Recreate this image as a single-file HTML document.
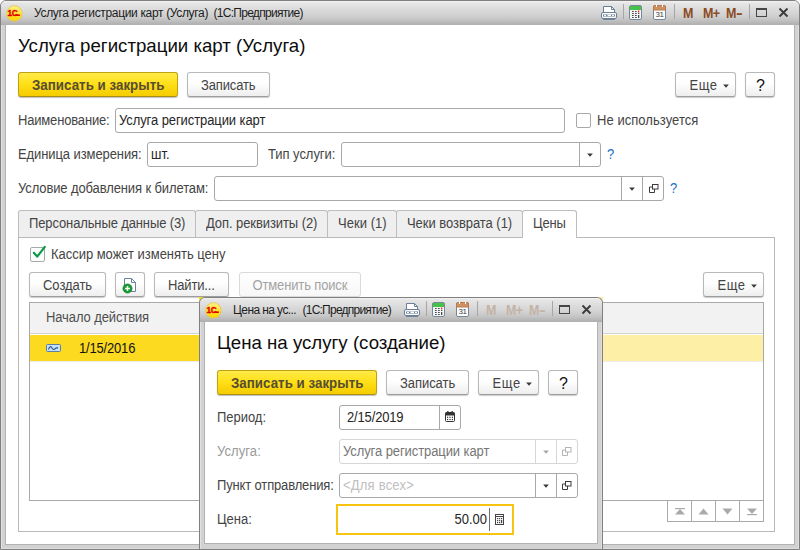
<!DOCTYPE html>
<html><head><meta charset="utf-8">
<style>
*{box-sizing:border-box;margin:0;padding:0}
html,body{width:800px;height:550px;overflow:hidden;background:#fff}
body{font-family:"Liberation Sans",sans-serif;font-size:13px;color:#444;position:relative}
.abs{position:absolute}
.t{position:absolute;white-space:pre;line-height:16px;height:16px;transform:scaleY(1.08);transform-origin:0 3.200px}
.h,.ti{transform:none}
.m{font-weight:bold;font-size:12.500px;letter-spacing:-.6px;transform:scaleY(1.1);transform-origin:0 12.500px}
.win{position:absolute;background:#d2d2d2;border:1px solid #808080;box-shadow:inset 1px 0 0 #e1e1e1,inset -1px 0 0 #dedede,inset 0 -1px 0 #dedede}
.tbar{position:absolute;left:0;top:0;right:0;background:linear-gradient(#f3f3f3 0,#e6e6e6 2px,#dddddd 30%,#d3d3d3 55%,#c9c9c9 72%,#bababa 88%,#adadad 100%)}
.content{position:absolute;background:#fff;box-shadow:0 0 0 1px #b2b2b2}
.btn{position:absolute;height:25px;border:1px solid #b9b9b9;border-bottom-color:#9d9d9d;border-radius:3px;background:linear-gradient(#ffffff 0%,#fefefe 45%,#eeeeee 100%);box-shadow:0 1px 1px rgba(0,0,0,.2)}
.ybtn{position:absolute;height:25px;border:1px solid #bfa212;border-bottom-color:#a88f14;border-radius:3px;background:linear-gradient(#ffeb4a 0%,#ffe01a 45%,#f5cc00 100%);box-shadow:0 1px 1px rgba(0,0,0,.25)}
.yt{font-weight:bold;font-size:13.330px;color:#574e30}
.inp{position:absolute;height:25px;border:1px solid #a8a8a8;border-radius:3px;background:#fff}
.inp.dis{border-color:#d6d6d6}
.vd{position:absolute;top:0;bottom:0;width:1px;background:#a8a8a8}
.dis .vd{background:#d6d6d6}
.cb{position:absolute;width:15px;height:15px;border:1px solid #a8a8a8;border-radius:2px;background:#fff}
.tab{position:absolute;top:210px;height:27px;border:1px solid #bdbdbd;border-bottom:none;border-radius:3px 3px 0 0;background:#efefef}
.q{color:#1a70c4}
.qb{font-size:16px;color:#111;transform:none}
.h{font-size:18.670px;line-height:22px;height:22px;color:#0d0d0d}
.ti{font-size:12px;color:#1c1c1c;letter-spacing:-.45px}
.dk{color:#262626}
</style></head><body>

<!-- ================= MAIN WINDOW ================= -->
<div class="win" style="left:0;top:0;width:800px;height:550px;border-radius:6px 6px 0 0">
 <div class="tbar" style="height:24px;border-radius:5px 5px 0 0"></div>
</div>
<div class="content" style="left:6px;top:25px;width:788px;height:519px"></div>

<svg class="abs" style="left:6px;top:5px" width="17" height="17" viewBox="0 0 17 17">
 <defs><linearGradient id="lg6" x1="0" y1="0" x2="0" y2="1"><stop offset="0" stop-color="#fff08a"/><stop offset=".55" stop-color="#ffe22e"/><stop offset="1" stop-color="#ffd400"/></linearGradient></defs>
 <circle cx="8.4" cy="8.4" r="7.7" fill="url(#lg6)" stroke="#e3c74a" stroke-width=".8"/>
 <text x="1.500" y="11" style="font-family:'Liberation Sans',sans-serif" font-weight="bold" font-size="8.200" fill="#e30000" stroke="#e30000" stroke-width=".35" letter-spacing="-0.300">1С</text>
 <rect x="9.500" y="9.400" width="4.400" height="1.600" fill="#e30000"/>
</svg>
<div class="t ti" style="left:34px;top:5px;letter-spacing:-0.338px">Услуга регистрации карт (Услуга)  </div>
<div class="t ti" style="left:213.500px;top:5px;letter-spacing:-0.715px">(1С:Предприятие)</div>

<svg class="abs" style="left:600px;top:4px" width="70" height="18" viewBox="600 4 70 18">
 <!-- printer -->
 <path d="M603.5 12.5V6.5H611.5L614.5 9.5V12.5" fill="#fff" stroke="#6b7f99" stroke-width="1"/>
 <path d="M611.5 6.5V9.5H614.5" fill="none" stroke="#6b7f99" stroke-width="1"/>
 <rect x="601.5" y="12.5" width="15" height="6" rx="1.5" fill="#fdfdfd" stroke="#6b7f99"/>
 <rect x="603" y="14.500" width="12" height="2" fill="#667a94"/>
 <rect x="604" y="15" width="2" height="1" fill="#fff"/><rect x="607.5" y="14.6" width="3.5" height="1.4" fill="#fff"/><rect x="612" y="15" width="2" height="1" fill="#fff"/>
 <rect x="603" y="19" width="12" height="1" fill="#6f839c"/>
 <!-- sep -->
 <rect x="623" y="4" width="1" height="15" fill="#a6a6a6"/>
 <!-- calculator -->
 <rect x="629.5" y="5.5" width="12" height="14" rx="1.5" fill="#f3f5f7" stroke="#77879a"/>
 <rect x="630" y="6" width="11" height="4" fill="#46c24b"/>
 <g fill="#4a4a4a"><rect x="632" y="11" width="1.700" height="1"/><rect x="635" y="11" width="1.700" height="1"/>
 <rect x="632" y="13" width="1.700" height="1"/><rect x="635" y="13" width="1.700" height="1"/><rect x="638" y="13" width="1.300" height="1"/>
 <rect x="632" y="15" width="1.700" height="1"/><rect x="635" y="15" width="1.700" height="1"/>
 <rect x="632" y="17" width="1.700" height="1"/><rect x="635" y="17" width="1.700" height="1"/><rect x="638" y="15" width="1.300" height="3"/></g>
 <rect x="638" y="10.500" width="1.300" height="2" fill="#f22"/>
 <!-- calendar -->
 <rect x="653.5" y="5.5" width="12" height="14" rx="1.5" fill="#fff" stroke="#77879a"/>
 <path d="M653.5 10V7A1.5 1.5 0 0 1 655 5.5H664A1.5 1.5 0 0 1 665.500 7V10Z" fill="#cd9163" stroke="#b87a4c"/>
 <rect x="656" y="4.600" width="1" height="2.400" fill="#fff"/><rect x="662" y="4.600" width="1" height="2.400" fill="#fff"/>
 <text x="659.400" y="17.300" style="font-family:'Liberation Sans',sans-serif" font-size="8" text-anchor="middle" fill="#3c3c3c" letter-spacing="-0.600">31</text>
 <!-- sep -->
</svg>
<div class="abs" style="left:674px;top:4px;width:1px;height:15px;background:#a6a6a6"></div>
<div class="t m" style="left:683px;top:6px;color:#8a4b22">M</div>
<div class="t m" style="left:703px;top:6px;color:#8a4b22">M+</div>
<div class="t m" style="left:726px;top:6px;color:#8a4b22">M<span style="display:inline-block;transform:scaleX(1.600);transform-origin:0 50%">-</span></div>
<div class="abs" style="left:749px;top:4px;width:1px;height:15px;background:#a6a6a6"></div>
<svg class="abs" style="left:754px;top:6px" width="36" height="14" viewBox="754 6 36 14">
 <rect x="756.500" y="8.500" width="10" height="8" fill="none" stroke="#454545" stroke-width="1"/>
 <rect x="756" y="8" width="11" height="2" fill="#454545"/>
 <path d="M779.500 8.500L787.500 16.500M787.500 8.500L779.500 16.500" stroke="#3c3c3c" stroke-width="1.900" fill="none"/>
</svg>

<div class="t h" style="left:18px;top:35px">Услуга регистрации карт (Услуга)</div>

<div class="ybtn" style="left:18px;top:72px;width:160px"></div>
<div class="t yt" style="left:32px;top:77px;letter-spacing:0.018px">Записать и закрыть</div>
<div class="btn" style="left:187px;top:72px;width:83px"></div>
<div class="t" style="left:201px;top:77px;letter-spacing:-0.130px">Записать</div>
<div class="btn" style="left:675px;top:72px;width:61px"></div>
<div class="t" style="left:689.500px;top:77px;letter-spacing:0.468px">Еще</div>
<svg class="abs" style="left:722px;top:84px" width="8" height="5" viewBox="0 0 8 5"><path d="M1.100 0.600H6.900L4 3.700Z" fill="#3a3a3a"/></svg>
<div class="btn" style="left:745px;top:72px;width:30px"></div>
<div class="t qb" style="left:756px;top:77.500px">?</div>

<div class="t" style="left:18px;top:112px;letter-spacing:-0.174px">Наименование:</div>
<div class="inp" style="left:115px;top:108px;width:450px"></div>
<div class="t dk" style="left:119px;top:112px;letter-spacing:-0.088px">Услуга регистрации карт</div>
<div class="cb" style="left:576px;top:113px"></div>
<div class="t" style="left:597px;top:112px;letter-spacing:0.053px">Не используется</div>

<div class="t" style="left:18px;top:146px;letter-spacing:-0.091px">Единица измерения:</div>
<div class="inp" style="left:147px;top:142px;width:111px"></div>
<div class="t dk" style="left:151px;top:146px">шт.</div>
<div class="t" style="left:268px;top:146px;letter-spacing:-0.044px">Тип услуги:</div>
<div class="inp" style="left:341px;top:142px;width:260px"><div class="vd" style="left:237px"></div></div>
<svg class="abs" style="left:586px;top:153px" width="8" height="5" viewBox="0 0 8 5"><path d="M1.100 0.600H6.900L4 3.700Z" fill="#3a3a3a"/></svg>
<div class="t q" style="left:607px;top:146px">?</div>

<div class="t" style="left:18px;top:180px;letter-spacing:-0.113px">Условие добавления к билетам:</div>
<div class="inp" style="left:214px;top:176px;width:450px"><div class="vd" style="left:406px"></div><div class="vd" style="left:427px"></div></div>
<svg class="abs" style="left:628px;top:187px" width="8" height="5" viewBox="0 0 8 5"><path d="M1.100 0.600H6.900L4 3.700Z" fill="#3a3a3a"/></svg><svg class="abs" style="left:649px;top:184px" width="11" height="11" viewBox="0 0 11 11"><rect x="3.500" y="0.500" width="5.500" height="4.500" fill="none" stroke="#3a3a3a"/><path d="M3.500 3H0.500V8.500H5.500V5" fill="none" stroke="#3a3a3a"/></svg>
<div class="t q" style="left:670px;top:180px">?</div>

<!-- tabs -->
<div class="abs" style="left:18px;top:237px;width:757px;height:295px;border:1px solid #b9b9b9;background:#fff"></div>
<div class="tab" style="left:18px;width:178px"></div>
<div class="tab" style="left:195px;width:133px"></div>
<div class="tab" style="left:327px;width:70px"></div>
<div class="tab" style="left:396px;width:127px"></div>
<div class="tab" style="left:522px;width:55px;background:#fff;height:28px"></div>
<div class="t" style="left:29px;top:215px;letter-spacing:-0.121px">Персональные данные (3)</div>
<div class="t" style="left:206px;top:215px;letter-spacing:-0.082px">Доп. реквизиты (2)</div>
<div class="t" style="left:338px;top:215px;letter-spacing:0.042px">Чеки (1)</div>
<div class="t" style="left:407px;top:215px;letter-spacing:-0.046px">Чеки возврата (1)</div>
<div class="t" style="left:533px;top:215px;letter-spacing:-0.159px">Цены</div>

<div class="cb" style="left:30px;top:247px"></div>
<svg class="abs" style="left:30px;top:243px" width="18" height="18" viewBox="0 0 18 18"><path d="M3.800 9.800L7.200 13.600L14.800 3.800" fill="none" stroke="#0b9a48" stroke-width="2.200" stroke-linecap="round" stroke-linejoin="round"/></svg>
<div class="t" style="left:51px;top:246px;letter-spacing:-0.030px">Кассир может изменять цену</div>

<div class="btn" style="left:29px;top:272px;width:77px"></div>
<div class="t" style="left:43px;top:277px;letter-spacing:-0.043px">Создать</div>
<div class="btn" style="left:115px;top:272px;width:30px"></div>
<svg class="abs" style="left:122px;top:277px" width="16" height="17" viewBox="122 277 16 17">
 <path d="M124.500 278.500H131.500L135.500 282.500V291.500H124.500Z" fill="#fff" stroke="#6c819c"/>
 <path d="M131.500 278.500V282.500H135.500" fill="none" stroke="#6c819c"/>
 <circle cx="127.500" cy="288.500" r="4.600" fill="#159a2f" stroke="#0d7d22" stroke-width=".6"/>
 <path d="M125 288.500H130M127.500 286V291" stroke="#fff" stroke-width="1.500"/>
</svg>
<div class="btn" style="left:154px;top:272px;width:75px"></div>
<div class="t" style="left:168px;top:277px;letter-spacing:-0.148px">Найти...</div>
<div class="btn" style="left:239px;top:272px;width:122px;box-shadow:0 1px 0 rgba(0,0,0,.05);border-color:#d9d9d9;background:linear-gradient(#fff,#f7f7f7)"></div>
<div class="t" style="left:252.500px;top:277px;color:#a3a3a3;letter-spacing:-0.141px">Отменить поиск</div>
<div class="btn" style="left:703px;top:272px;width:61px"></div>
<div class="t" style="left:717.500px;top:277px;letter-spacing:0.468px">Еще</div>
<svg class="abs" style="left:750px;top:284px" width="8" height="5" viewBox="0 0 8 5"><path d="M1.100 0.600H6.900L4 3.700Z" fill="#3a3a3a"/></svg>

<!-- table -->
<div class="abs" style="left:29px;top:302px;width:735px;height:199px;border:1px solid #a9a9a9;background:#fff"></div>
<div class="abs" style="left:30px;top:303px;width:733px;height:30px;background:#f2f2f2"></div>
<div class="abs" style="left:30px;top:333px;width:733px;height:1px;background:#d3d3d3"></div>
<div class="t" style="left:46px;top:309px;color:#4f4f4f;letter-spacing:-0.107px">Начало действия</div>
<div class="abs" style="left:30px;top:335px;width:733px;height:26px;background:#fdf0a6"></div>
<div class="abs" style="left:30px;top:335px;width:172px;height:26px;background:#fbda1f"></div>
<div class="abs" style="left:30px;top:361px;width:733px;height:1px;background:#ececec"></div>
<svg class="abs" style="left:46px;top:344px" width="16" height="9" viewBox="0 0 16 9"><rect x=".5" y=".5" width="14" height="7" rx="1" fill="#c9dff4" stroke="#587fa6"/><path d="M2.500 5.500C3.500 2 5 2 6 4S8.500 6 9.500 4.200L12 3.600" fill="none" stroke="#1b4f94" stroke-width="1.100"/></svg>
<div class="t" style="left:79px;top:340px;color:#111;letter-spacing:-0.180px">1/15/2016</div>
<div class="abs" style="left:667px;top:500px;width:97px;height:22px;border:1px solid #a9a9a9;background:#fff"></div>
<div class="abs" style="left:691px;top:500px;width:1px;height:22px;background:#a9a9a9"></div>
<div class="abs" style="left:715px;top:500px;width:1px;height:22px;background:#a9a9a9"></div>
<div class="abs" style="left:739px;top:500px;width:1px;height:22px;background:#a9a9a9"></div>
<svg class="abs" style="left:667px;top:500px" width="97" height="22" viewBox="667 500 97 22" fill="#aaa">
 <rect x="675" y="508" width="10" height="1.200"/><path d="M680 509L685 514.500H675Z"/>
 <path d="M703.500 508.500L708.500 514.500H698.500Z"/>
 <path d="M722.500 508.500H732.500L727.500 514.500Z"/>
 <path d="M747 508.500H757L752 514Z"/><rect x="747" y="514" width="10" height="1.200"/>
</svg>

<!-- ================= POPUP WINDOW ================= -->
<div class="abs" style="left:199px;top:297px;width:5px;height:5px;background:#fbda1f"></div>
<div class="abs" style="left:598px;top:297px;width:5px;height:5px;background:#fdf0a6"></div>
<div class="win" style="left:199px;top:297px;width:404px;height:252px;border-radius:6px 6px 0 0;border-bottom:none;box-shadow:inset 1px 0 0 #e1e1e1,inset -1px 0 0 #dedede">
 <div class="tbar" style="height:24px;border-radius:5px 5px 0 0"></div>
</div>
<div class="content" style="left:205px;top:322px;width:392px;height:221px"></div>

<svg class="abs" style="left:205px;top:302px" width="17" height="17" viewBox="0 0 17 17">
 <defs><linearGradient id="lg205" x1="0" y1="0" x2="0" y2="1"><stop offset="0" stop-color="#fff08a"/><stop offset=".55" stop-color="#ffe22e"/><stop offset="1" stop-color="#ffd400"/></linearGradient></defs>
 <circle cx="8.4" cy="8.4" r="7.7" fill="url(#lg205)" stroke="#e3c74a" stroke-width=".8"/>
 <text x="1.500" y="11" style="font-family:'Liberation Sans',sans-serif" font-weight="bold" font-size="8.200" fill="#e30000" stroke="#e30000" stroke-width=".35" letter-spacing="-0.300">1С</text>
 <rect x="9.500" y="9.400" width="4.400" height="1.600" fill="#e30000"/>
</svg>
<div class="t ti" style="left:233px;top:302px;letter-spacing:-0.587px">Цена на ус...  </div>
<div class="t ti" style="left:302.500px;top:302px;letter-spacing:-0.765px">(1С:Предприятие)</div>

<svg class="abs" style="left:403px;top:301px" width="70" height="18" viewBox="600 4 70 18">
 <!-- printer -->
 <path d="M603.5 12.5V6.5H611.5L614.5 9.5V12.5" fill="#fff" stroke="#6b7f99" stroke-width="1"/>
 <path d="M611.5 6.5V9.5H614.5" fill="none" stroke="#6b7f99" stroke-width="1"/>
 <rect x="601.5" y="12.5" width="15" height="6" rx="1.5" fill="#fdfdfd" stroke="#6b7f99"/>
 <rect x="603" y="14.500" width="12" height="2" fill="#667a94"/>
 <rect x="604" y="15" width="2" height="1" fill="#fff"/><rect x="607.5" y="14.6" width="3.5" height="1.4" fill="#fff"/><rect x="612" y="15" width="2" height="1" fill="#fff"/>
 <rect x="603" y="19" width="12" height="1" fill="#6f839c"/>
 <!-- sep -->
 <rect x="623" y="4" width="1" height="15" fill="#a6a6a6"/>
 <!-- calculator -->
 <rect x="629.5" y="5.5" width="12" height="14" rx="1.5" fill="#f3f5f7" stroke="#77879a"/>
 <rect x="630" y="6" width="11" height="4" fill="#46c24b"/>
 <g fill="#4a4a4a"><rect x="632" y="11" width="1.700" height="1"/><rect x="635" y="11" width="1.700" height="1"/>
 <rect x="632" y="13" width="1.700" height="1"/><rect x="635" y="13" width="1.700" height="1"/><rect x="638" y="13" width="1.300" height="1"/>
 <rect x="632" y="15" width="1.700" height="1"/><rect x="635" y="15" width="1.700" height="1"/>
 <rect x="632" y="17" width="1.700" height="1"/><rect x="635" y="17" width="1.700" height="1"/><rect x="638" y="15" width="1.300" height="3"/></g>
 <rect x="638" y="10.500" width="1.300" height="2" fill="#f22"/>
 <!-- calendar -->
 <rect x="653.5" y="5.5" width="12" height="14" rx="1.5" fill="#fff" stroke="#77879a"/>
 <path d="M653.5 10V7A1.5 1.5 0 0 1 655 5.5H664A1.5 1.5 0 0 1 665.500 7V10Z" fill="#cd9163" stroke="#b87a4c"/>
 <rect x="656" y="4.600" width="1" height="2.400" fill="#fff"/><rect x="662" y="4.600" width="1" height="2.400" fill="#fff"/>
 <text x="659.400" y="17.300" style="font-family:'Liberation Sans',sans-serif" font-size="8" text-anchor="middle" fill="#3c3c3c" letter-spacing="-0.600">31</text>
 <!-- sep -->
</svg>
<div class="abs" style="left:477px;top:301px;width:1px;height:15px;background:#a6a6a6"></div>
<div class="t m" style="left:486px;top:303px;color:#c3b3a6">M</div>
<div class="t m" style="left:506px;top:303px;color:#c3b3a6">M+</div>
<div class="t m" style="left:529px;top:303px;color:#c3b3a6">M<span style="display:inline-block;transform:scaleX(1.600);transform-origin:0 50%">-</span></div>
<div class="abs" style="left:552px;top:301px;width:1px;height:15px;background:#a6a6a6"></div>
<svg class="abs" style="left:557px;top:303px" width="36" height="14" viewBox="754 6 36 14">
 <rect x="756.500" y="8.500" width="10" height="8" fill="none" stroke="#454545" stroke-width="1"/>
 <rect x="756" y="8" width="11" height="2" fill="#454545"/>
 <path d="M779.500 8.500L787.500 16.500M787.500 8.500L779.500 16.500" stroke="#3c3c3c" stroke-width="1.900" fill="none"/>
</svg>

<div class="t h" style="left:217px;top:332px">Цена на услугу (создание)</div>

<div class="ybtn" style="left:217px;top:370px;width:160px"></div>
<div class="t yt" style="left:231px;top:375px;letter-spacing:0.018px">Записать и закрыть</div>
<div class="btn" style="left:386px;top:370px;width:83px"></div>
<div class="t" style="left:400px;top:375px;letter-spacing:-0.052px">Записать</div>
<div class="btn" style="left:478px;top:370px;width:61px"></div>
<div class="t" style="left:492.500px;top:375px;letter-spacing:0.619px">Еще</div>
<svg class="abs" style="left:525px;top:382px" width="8" height="5" viewBox="0 0 8 5"><path d="M1.100 0.600H6.900L4 3.700Z" fill="#3a3a3a"/></svg>
<div class="btn" style="left:548px;top:370px;width:30px"></div>
<div class="t qb" style="left:559px;top:375.500px">?</div>

<div class="t" style="left:217px;top:409px;letter-spacing:-0.036px">Период:</div>
<div class="inp" style="left:339px;top:405px;width:122px"><div class="vd" style="left:99px"></div></div>
<div class="t dk" style="left:347px;top:409px;letter-spacing:-0.155px">2/15/2019</div>
<svg class="abs" style="left:445px;top:411px" width="10" height="11" viewBox="0 0 10 11"><rect x=".5" y="1.500" width="9" height="9" rx="1" fill="#fff" stroke="#333"/><rect x=".5" y="1.500" width="9" height="3" fill="#333"/><rect x="2.200" y="0" width="1.300" height="2.200" fill="#333"/><rect x="6.500" y="0" width="1.300" height="2.200" fill="#333"/><g fill="#333"><rect x="2" y="5.700" width="1.200" height="1.200"/><rect x="4.400" y="5.700" width="1.200" height="1.200"/><rect x="6.800" y="5.700" width="1.200" height="1.200"/><rect x="2" y="7.900" width="1.200" height="1.200"/><rect x="4.400" y="7.900" width="1.200" height="1.200"/><rect x="6.800" y="7.900" width="1.200" height="1.200"/></g></svg>

<div class="t" style="left:217px;top:443px;color:#9a9a9a;letter-spacing:0.088px">Услуга:</div>
<div class="inp dis" style="left:339px;top:439px;width:239px"><div class="vd" style="left:195px"></div><div class="vd" style="left:216px"></div></div>
<div class="t" style="left:343px;top:443px;color:#767676;letter-spacing:-0.088px">Услуга регистрации карт</div>
<svg class="abs" style="left:541.5px;top:450px" width="8" height="5" viewBox="0 0 8 5"><path d="M1.100 0.600H6.900L4 3.700Z" fill="#a6a6a6"/></svg><svg class="abs" style="left:562px;top:447px" width="11" height="11" viewBox="0 0 11 11"><rect x="3.500" y="0.500" width="5.500" height="4.500" fill="none" stroke="#b4b4b4"/><path d="M3.500 3H0.500V8.500H5.500V5" fill="none" stroke="#b4b4b4"/></svg>

<div class="t" style="left:217px;top:477px;letter-spacing:-0.149px">Пункт отправления:</div>
<div class="inp" style="left:339px;top:473px;width:239px"><div class="vd" style="left:195px"></div><div class="vd" style="left:216px"></div></div>
<div class="t" style="left:343px;top:477px;color:#c0c0c0;letter-spacing:0.207px">&lt;Для всех&gt;</div>
<svg class="abs" style="left:541.5px;top:484px" width="8" height="5" viewBox="0 0 8 5"><path d="M1.100 0.600H6.900L4 3.700Z" fill="#3a3a3a"/></svg><svg class="abs" style="left:562px;top:481px" width="11" height="11" viewBox="0 0 11 11"><rect x="3.500" y="0.500" width="5.500" height="4.500" fill="none" stroke="#3a3a3a"/><path d="M3.500 3H0.500V8.500H5.500V5" fill="none" stroke="#3a3a3a"/></svg>

<div class="t" style="left:217px;top:511px;letter-spacing:-0.019px">Цена:</div>
<div class="abs" style="left:336px;top:504px;width:178px;height:31px;border:2px solid #f7c50f;background:#fff"></div>
<div class="t dk" style="left:400px;top:511px;width:87px;text-align:right">50.00</div>
<div class="abs" style="left:489px;top:508px;width:1px;height:23px;background:#6e6e6e"></div>
<svg class="abs" style="left:495px;top:514px" width="10" height="11" viewBox="0 0 10 11"><rect x=".5" y=".5" width="8" height="10" fill="#fff" stroke="#444"/><rect x="1" y="2" width="7" height="1" fill="#444"/><g fill="#444"><rect x="2" y="4" width="1.200" height="1.200"/><rect x="4" y="4" width="1.200" height="1.200"/><rect x="6" y="4" width="1.200" height="1.200"/><rect x="2" y="6" width="1.200" height="1.200"/><rect x="4" y="6" width="1.200" height="1.200"/><rect x="6" y="6" width="1.200" height="3.200"/><rect x="2" y="8" width="1.200" height="1.200"/><rect x="4" y="8" width="1.200" height="1.200"/></g></svg>

</body></html>
